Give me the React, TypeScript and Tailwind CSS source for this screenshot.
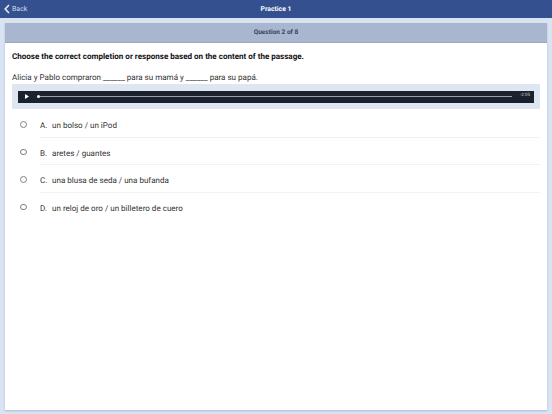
const options = [
  ["A.", "un bolso / un iPod"],
  ["B.", "aretes / guantes"],
  ["C.", "una blusa de seda / una bufanda"],
  ["D.", "un reloj de oro / un billetero de cuero"],
];

export default function App() {
  return (
    <div className="w-[552px] h-[414px] overflow-hidden flex flex-col bg-[#d9e4f3] font-['Roboto',sans-serif] [text-rendering:geometricPrecision]">
      <header className="h-[18px] shrink-0 bg-[#34508f] flex items-center relative text-white">
        <div className="flex items-center pl-1 gap-[2px] text-[#d5deee]">
          <svg width="6" height="10" viewBox="0 0 6 10" fill="none">
            <path d="M5 1 L1.2 5 L5 9" stroke="#e6ecf6" strokeWidth="1.6" />
          </svg>
          <span className="text-[7px] leading-none">Back</span>
        </div>
        <span className="absolute left-0 right-0 text-center text-[6.8px] font-bold leading-none">Practice 1</span>
      </header>
      <main className="flex-1 mt-[5px] mx-[5px] mb-[4px] bg-white shadow-[0_1px_2px_rgba(90,100,170,0.35)] flex flex-col">
        <div className="h-[20px] shrink-0 bg-[#a9b6cf] flex items-center justify-center text-[6.5px] font-bold text-[#37425a] border-b border-[#9ba9c4]">
          Question 2 of 8
        </div>
        <div className="px-[7px]">
          <p className="mt-[7px] text-[8.05px] leading-[13px] font-bold text-[#111]">
            Choose the correct completion or response based on the content of the passage.
          </p>
          <p className="mt-[9px] text-[8.05px] leading-[12px] text-[#333]">
            Alicia y Pablo compraron ______ para su mamá y ______ para su papá.
          </p>
          <div className="w-[528px] h-[25px] bg-[#dde6f1] flex items-center px-[6px]">
            <div className="w-full h-[12px] bg-[#1b222e] flex items-center text-white">
              <svg className="ml-[7px]" width="4" height="5" viewBox="0 0 4 5">
                <path d="M0 0 L4 2.5 L0 5 Z" fill="#fff" />
              </svg>
              <div className="ml-[8px] w-[3px] h-[3px] rounded-full bg-white" />
              <div className="flex-1 h-px bg-[#9aa1ac]" />
              <span className="ml-[8px] mr-[4px] text-[4.5px] leading-none text-[#c8ccd2]">-2:05</span>
            </div>
          </div>
        </div>
        <div className="mt-[1px] pl-[15px] pr-[7px]">
          {options.map(([letter, text], i) => (
            <div key={letter} className="flex items-start h-[27.6px]">
              <div className="mt-[11px] w-[6.5px] h-[6.5px] rounded-full border border-[#808080] shrink-0" />
              <div className={`ml-[13.5px] flex-1 h-full pt-[10px] flex text-[8.05px] leading-[12px] text-[#333] ${i < 3 ? "border-b border-[#f2f2f2]" : ""}`}>
                <span className="w-[12px]">{letter}</span>
                <span>{text}</span>
              </div>
            </div>
          ))}
        </div>
      </main>
    </div>
  );
}
